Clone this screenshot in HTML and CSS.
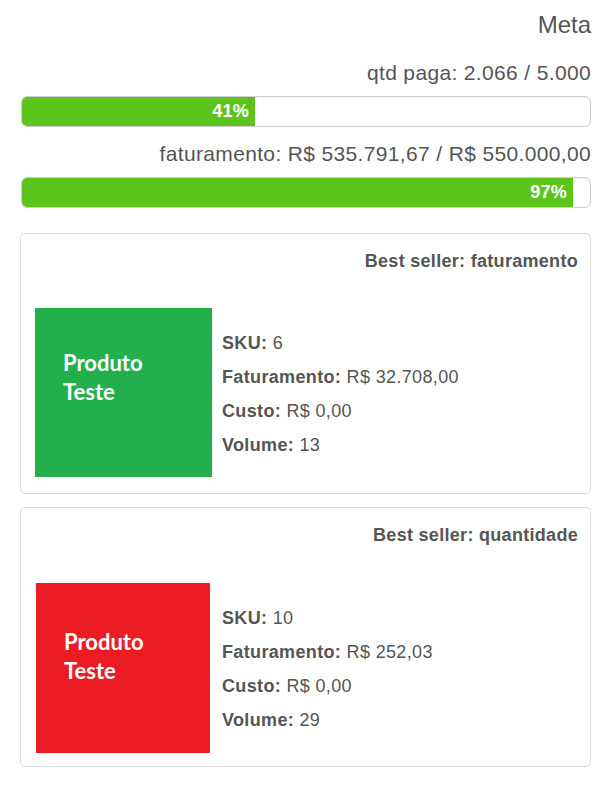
FILE: index.html
```html
<!DOCTYPE html>
<html lang="pt">
<head>
<meta charset="utf-8">
<title>Meta</title>
<link rel="stylesheet" href="styles.css">
</head>
<body>
<div class="panel">
  <div class="title">Meta</div>
  <div class="goal">
    <div class="goal-label">qtd paga: 2.066 / 5.000</div>
    <div class="bar"><div class="fill" style="width:41%">41%</div></div>
  </div>
  <div class="goal">
    <div class="goal-label">faturamento: R$ 535.791,67 / R$ 550.000,00</div>
    <div class="bar"><div class="fill" style="width:97%">97%</div></div>
  </div>

  <div class="card">
    <div class="card-title">Best seller: faturamento</div>
    <div class="card-body">
      <div class="thumb thumb-green"><span>Produto<br>Teste</span></div>
      <ul class="details">
        <li><b>SKU:</b> 6</li>
        <li><b>Faturamento:</b> R$ 32.708,00</li>
        <li><b>Custo:</b> R$ 0,00</li>
        <li><b>Volume:</b> 13</li>
      </ul>
    </div>
  </div>

  <div class="card card-second">
    <div class="card-title">Best seller: quantidade</div>
    <div class="card-body">
      <div class="thumb thumb-red"><span>Produto<br>Teste</span></div>
      <ul class="details">
        <li><b>SKU:</b> 10</li>
        <li><b>Faturamento:</b> R$ 252,03</li>
        <li><b>Custo:</b> R$ 0,00</li>
        <li><b>Volume:</b> 29</li>
      </ul>
    </div>
  </div>
</div>
</body>
</html>
```

FILE: styles.css
```css
* { box-sizing: border-box; }
html, body { margin: 0; padding: 0; background: #fff; }
body {
  font-family: "Liberation Sans", Arial, sans-serif;
  color: #555;
}
.panel {
  padding: 12px 15px 0 20px;
}
.title {
  text-align: right;
  font-size: 24px;
  line-height: 26px;
  color: #555;
}
.goal {
  display: flex;
  flex-direction: column;
}
.goal-label {
  text-align: right;
  font-size: 21px;
  line-height: 24px;
  letter-spacing: 0.35px;
  color: #555;
  margin-top: 23px;
  margin-bottom: 11px;
}
.goal + .goal .goal-label { margin-top: 15px; }
.bar {
  margin-left: 1px;
  height: 31px;
  border: 1px solid #cfcfcf;
  border-radius: 6px;
  overflow: hidden;
  background: #fff;
  box-shadow: inset 0 1px 2px rgba(0,0,0,0.08);
}
.fill {
  height: 100%;
  background: #5dc41e;
  color: #fff;
  font-weight: bold;
  font-size: 18px;
  line-height: 29px;
  text-align: right;
  padding-right: 6px;
  letter-spacing: 0.2px;
}
.card {
  margin-top: 25px;
  border: 1px solid #dcdcdc;
  border-radius: 5px;
  padding: 16px 12px 16px 14px;
}
.card-second { margin-top: 13px; padding-bottom: 13px; }
.card-title {
  text-align: right;
  font-weight: bold;
  font-size: 18px;
  line-height: 22px;
  letter-spacing: 0.3px;
  color: #555;
}
.card-body {
  margin-top: 36px;
  display: flex;
  align-items: center;
  gap: 10px;
}
.card-second .card-body { margin-top: 37px; gap: 12px; }
.thumb {
  width: 177px;
  height: 169px;
  flex: none;
  color: #fff;
  font-family: Lato, "Open Sans", sans-serif;
  font-weight: bold;
  font-size: 22px;
  line-height: 29px;
  padding: 40px 0 0 28px;
}
.thumb-green { background: #23b04c; }
.thumb-red { background: #ec1c24; width: 174px; height: 170px; margin-left: 1px; padding-top: 44px; }
.details {
  list-style: none;
  margin: 0;
  padding: 2px 0 0;
  font-size: 18px;
  line-height: 34px;
  letter-spacing: 0.35px;
  color: #555;
}
.details b { color: #555; }
```
